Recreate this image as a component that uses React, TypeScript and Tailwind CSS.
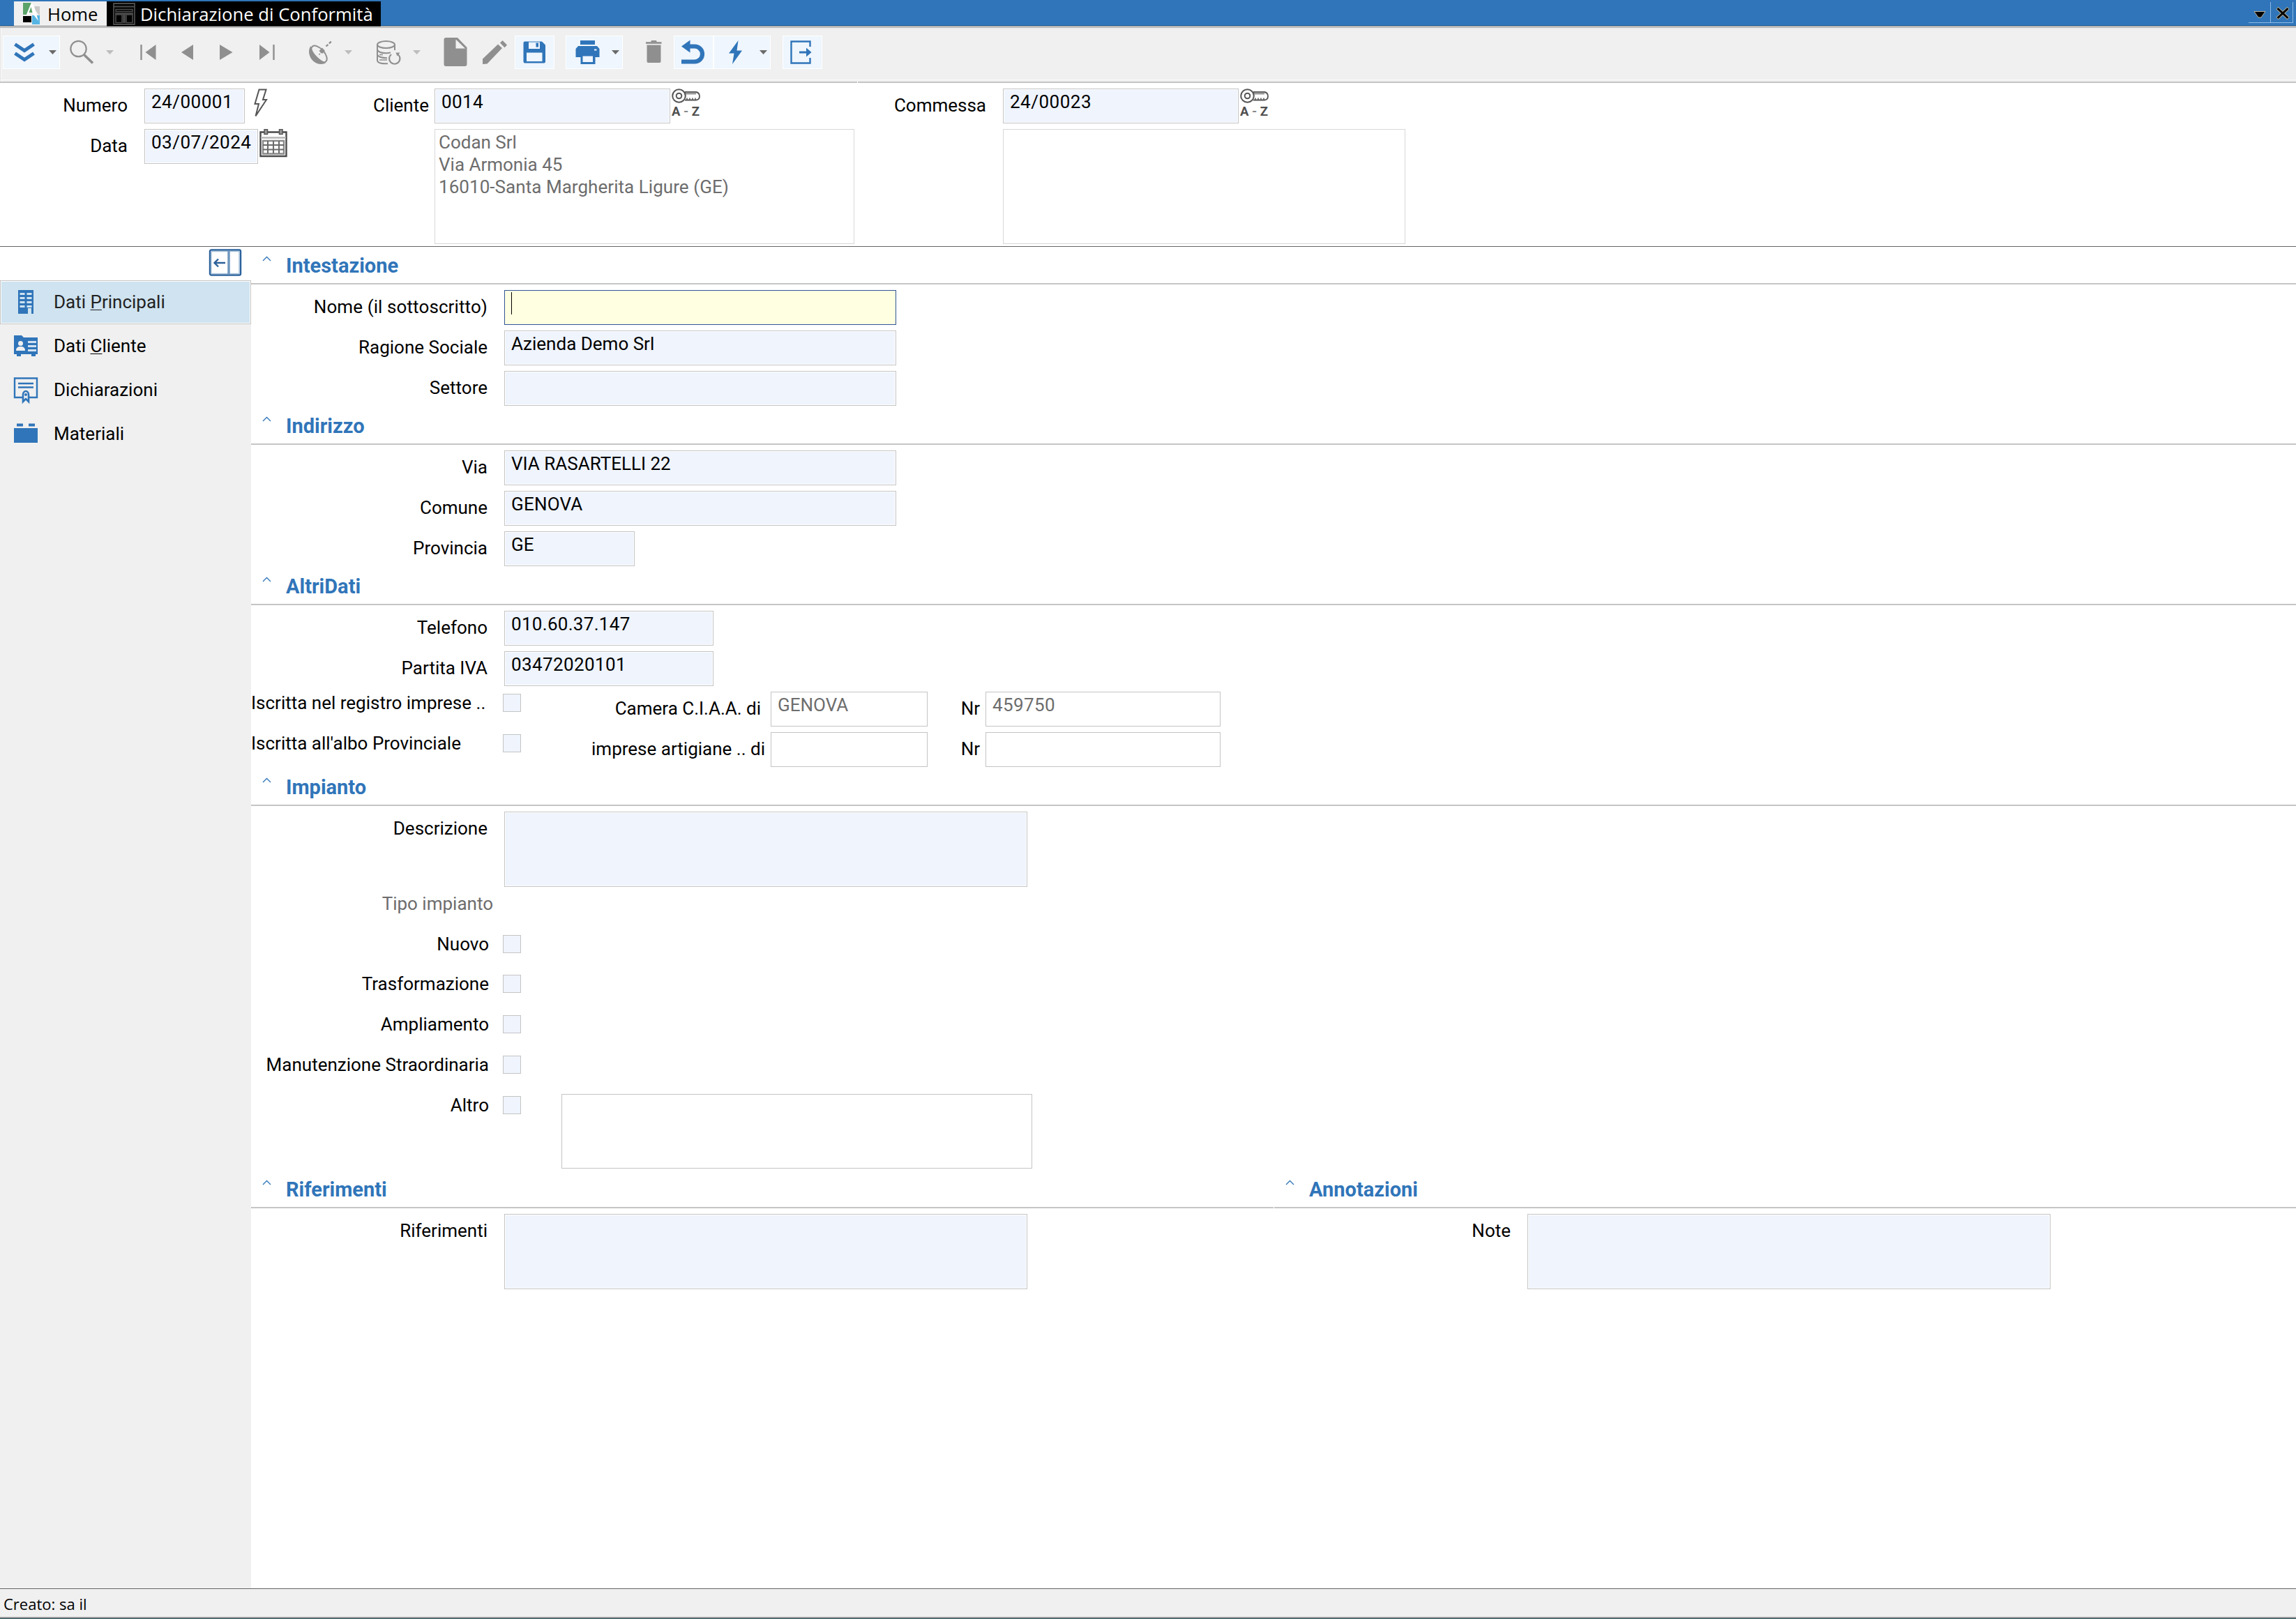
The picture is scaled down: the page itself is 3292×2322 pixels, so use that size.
import React from "react";
import type { ReactNode } from "react";

const BLUE = "#3075b9";
const GRAY = "#8f8f8f";

/* ---------- toolbar icons ---------- */

function Icon({ children, className = "" }: { children: ReactNode; className?: string }) {
  return (
    <svg width="34" height="34" viewBox="0 0 34 34" fill="none" className={`block shrink-0 overflow-visible ${className}`}>
      {children}
    </svg>
  );
}

const ChevronsDown = () => (
  <Icon>
    <path d="M3.5 5.5 17 14.5 30.5 5.5M3.5 18.5 17 27.5 30.5 18.5" stroke={BLUE} strokeWidth="5" />
  </Icon>
);
const Search = () => (
  <Icon>
    <circle cx="12.5" cy="12" r="11.2" stroke={GRAY} strokeWidth="2.2" />
    <path d="M20.5 20.5 33 32.5" stroke={GRAY} strokeWidth="3.6" />
  </Icon>
);
const First = () => (
  <Icon>
    <path d="M7.500 6v22" stroke={GRAY} strokeWidth="2.4" />
    <path d="M28.500 6v22L13.500 17z" fill={GRAY} />
  </Icon>
);
const Prev = () => (
  <Icon>
    <path d="M25 6v22L8 17z" fill={GRAY} />
  </Icon>
);
const Next = () => (
  <Icon>
    <path d="M6 6v22L24.500 17z" fill={GRAY} />
  </Icon>
);
const Last = () => (
  <Icon>
    <path d="M6 6v22L20.500 17z" fill={GRAY} />
    <path d="M26.500 6v22" stroke={GRAY} strokeWidth="2.4" />
  </Icon>
);
const Dish = () => (
  <Icon>
    <path d="M3.500 8C-1 14 1 24 7 29.500s14 5.500 18.500 2.500C17 29 6 19 3.500 8z" fill={GRAY} />
    <ellipse cx="15.500" cy="19.500" rx="14.500" ry="7.500" transform="rotate(48 15.5 19.500)" stroke={GRAY} strokeWidth="2" />
    <path d="M15.500 20.500 20 15" stroke={GRAY} strokeWidth="1.600" strokeDasharray="2 1.500" />
    <path d="M20 10.500 24 15 20 19 15.500 15z" fill={GRAY} />
    <path d="M25.500 8.500 34 .500" stroke={GRAY} strokeWidth="2.400" strokeDasharray="4 2" />
  </Icon>
);
const Database = () => (
  <Icon>
    <ellipse cx="13.500" cy="6" rx="12.500" ry="5" stroke={GRAY} strokeWidth="2" />
    <path d="M1 6v22.500c0 3 5 4.800 12 4.800h3M26 6v8" stroke={GRAY} strokeWidth="2" />
    <path d="M1 13.500c1.500 3.200 6 4.700 12.500 4.700 2.500 0 4.500-.2 6.500-.8M1 20.500c1.500 3.200 6 4.700 14 4.700" stroke={GRAY} strokeWidth="2" />
    <path d="M4 20.500h5M4 28h11" stroke={GRAY} strokeWidth="1.400" />
    <path d="M21 20a7.700 7.700 0 1 0 9.500 0" stroke={GRAY} strokeWidth="2.200" />
    <path d="M27.500 17.500h6l-4 5z" fill={GRAY} />
  </Icon>
);
const NewDoc = () => (
  <Icon>
    <path d="M3.500-4H21L34.500 10V34a3 3 0 0 1-3 3h-27a3 3 0 0 1-3-3V-1a3 3 0 0 1 3-3z" fill={GRAY} />
    <path d="M18.500-1.500V11.500h13.500z" fill="#f0f0f0" />
  </Icon>
);
const Pencil = () => (
  <Icon>
    <path d="M0 34V26.500L22 5.500l6 5.500L6.500 33.500z" fill={GRAY} />
    <path d="M25 3.500 28.500 0 35 6.500l-3.500 3.800z" fill={GRAY} />
  </Icon>
);
const Save = () => (
  <Icon>
    <path fillRule="evenodd" fill={BLUE} d="M1.500 3.500a2 2 0 0 1 2-2H28l5 5V30.500a2 2 0 0 1-2 2H3.500a2 2 0 0 1-2-2zM9 2v10h16V2zM6 17.500V30h22.500V17.500z" />
    <path d="M19.500 3.500h3.500v6h-3.500z" fill={BLUE} />
    <path d="M9 2.500h16" stroke="#9fc1e2" strokeWidth="1.500" />
  </Icon>
);
const Printer = () => (
  <Icon>
    <path d="M7 0h21v6H7z" fill={BLUE} />
    <path fillRule="evenodd" fill={BLUE} d="M4 8h27l3.500 4V24h-6v10h-21V24h-7V12zM10.500 22.500V31h14.500v-8.500z" />
    <path d="M27 13.500h3.500" stroke="#eff6fd" strokeWidth="2" />
  </Icon>
);
const Trash = () => (
  <Icon>
    <path d="M6 3.500h22.500" stroke={GRAY} strokeWidth="2.600" />
    <path d="M13 2.500 14 0h7l1 2.500" fill={GRAY} />
    <path d="M7.500 6.500h20V30a2 2 0 0 1-2 2h-16a2 2 0 0 1-2-2z" fill={GRAY} />
  </Icon>
);
const Undo = () => (
  <Icon>
    <path d="M0 30.500h19a11 11 0 0 0 0-22H11" stroke={BLUE} strokeWidth="6.200" />
    <path d="M0 8.500 12.500-.5v18z" fill={BLUE} />
  </Icon>
);
const Bolt = () => (
  <Icon>
    <path d="M21.500 0 8 18.500h7.500L13 34 27 14.500h-7.500z" fill={BLUE} />
  </Icon>
);
const Exit = () => (
  <Icon>
    <path d="M28.500 9V1.500H1.500v31h27V25" stroke={BLUE} strokeWidth="2.400" />
    <path d="M13 17h12" stroke={BLUE} strokeWidth="3" />
    <path d="M23 10.500 30.500 17 23 23.500z" fill={BLUE} />
  </Icon>
);

function Caret({ on }: { on?: boolean }) {
  return (
    <svg width="11" height="6" viewBox="0 0 11 6" className="mt-[14px] block shrink-0">
      <path d="M0 0h11L5.500 6z" fill={on ? "#6a6a6a" : "#bdbdbd"} />
    </svg>
  );
}

function Tool({ icon, on, menu, className = "" }: { icon: ReactNode; on?: boolean; menu?: boolean; className?: string }) {
  return (
    <div
      className={`flex h-[48px] shrink-0 border pt-[6px] ${menu ? "w-[82px] pl-[13px]" : "w-[57px] pl-[10px]"} ${
        on ? "border-white bg-[#eff6fd]" : "border-transparent"
      } ${className}`}
    >
      {icon}
      {menu && (
        <div className="ml-[18px]">
          <Caret on={on} />
        </div>
      )}
    </div>
  );
}

/* ---------- header icons ---------- */

const BoltOutline = () => (
  <svg width="22" height="42" viewBox="0 0 22 42" fill="none" className="block shrink-0">
    <path d="M8.500 1.500h10L14 16h5L3.500 39.500 8 22H2.500z" stroke="#555" strokeWidth="2" />
  </svg>
);
const Calendar = () => (
  <svg width="40" height="41" viewBox="0 0 40 41" fill="none" className="block shrink-0">
    <path d="M1.500 4.500h37V39h-37z" stroke="#4a4a4a" strokeWidth="2.400" />
    <path d="M2 12.500h36" stroke="#b5b5b5" strokeWidth="2.500" />
    <path d="M7 .5h4.500v7H7zM28.500.5H33v7h-4.500z" fill="#999" stroke="#555" strokeWidth="1.500" />
    <path d="M5 17h30v18.500H5z" fill="#fff" stroke="#8a8a8a" strokeWidth="2.400" />
    <path d="M12 17v18M20 17v18M28 17v18M5 23h30M5 29.500h30" stroke="#6a6a6a" strokeWidth="2" />
  </svg>
);
const KeyAZ = () => (
  <div className="w-[42px] shrink-0">
    <svg width="42" height="22" viewBox="0 0 42 22" fill="none" className="block">
      <path d="M19 5h16q5 1 5 6t-5 5.500H19" stroke="#555" strokeWidth="1.800" />
      <path d="M20 5.500h15v3H20z" fill="#999" />
      <path d="M22 16v-2.500M26 16v-2.500M30 16v-2.500M34 16v-2.500" stroke="#555" strokeWidth="1.500" />
      <circle cx="10.500" cy="10.500" r="9.300" fill="#fff" stroke="#555" strokeWidth="2" />
      <circle cx="10.500" cy="10.500" r="3.800" stroke="#555" strokeWidth="2" />
    </svg>
    <div className="flex justify-between pr-[2px] text-[18.5px] leading-[22px] font-bold text-[#4f4f4f]">
      <span>A</span>
      <span className="text-[#8a8a8a]">-</span>
      <span>Z</span>
    </div>
  </div>
);

/* ---------- sidebar icons ---------- */

const Building = () => (
  <svg width="36" height="36" viewBox="0 0 36 36" className="block shrink-0">
    <path d="M7 1h22v34h-3v-8h-5v8H7z" fill={BLUE} />
    <path d="M9.500 5h7v3H9.500zM19.500 5h7v3h-7zM9.500 11h7v3H9.500zM19.500 11h7v3h-7zM9.500 17h7v3H9.500zM19.500 17h7v3h-7zM9.500 23h7v3H9.500zM19.500 23h7v3h-7z" fill="#cfe3f0" />
  </svg>
);
const IdCard = () => (
  <svg width="36" height="36" viewBox="0 0 36 36" className="block shrink-0">
    <path d="M1 3h11l3 3h20v24h-3v3h-6v-3H11v3H5v-3H1z" fill={BLUE} />
    <circle cx="10.500" cy="14.500" r="3.500" fill="#f0f0f0" />
    <path d="M4 25c0-5 3-6 6.500-6s6.500 1 6.500 6z" fill="#f0f0f0" />
    <path d="M21 11h12v3H21zM21 17h12v3H21zM21 23h12v3H21z" fill="#d3e2f1" />
  </svg>
);
const Certificate = () => (
  <svg width="36" height="42" viewBox="0 0 36 42" fill="none" className="block shrink-0">
    <path d="M13 29H2V1.500h32V29H23" stroke={BLUE} strokeWidth="2.400" />
    <path d="M7 9h22M7 14.500h22" stroke={BLUE} strokeWidth="2.600" />
    <path d="M14 35V25a4 5 0 0 1 8 0v10l-4-4z" fill="#f0f0f0" stroke={BLUE} strokeWidth="2.600" />
    <circle cx="18" cy="25" r="2" fill={BLUE} />
  </svg>
);
const Brick = () => (
  <svg width="36" height="36" viewBox="0 0 36 36" className="block shrink-0">
    <path d="M5 3.500h9v4H5zM22 3.500h9v4h-9zM1 10h34v21H1z" fill={BLUE} />
  </svg>
);

/* ---------- form pieces ---------- */

const Box = ({ children, className = "" }: { children?: ReactNode; className?: string }) => (
  <div className={`shrink-0 border border-[#c4c4c4] pt-[2px] pl-[9px] leading-[32px] whitespace-pre ${className}`}>{children}</div>
);
const FILL = "bg-[#eff4fd] shadow-[inset_0_0_0_1px_#fff]";

const Label = ({ children, className = "" }: { children: ReactNode; className?: string }) => (
  <div className={`mt-[8px] shrink-0 text-right leading-[32px] whitespace-nowrap ${className}`}>{children}</div>
);

function Field({ label, value, width, tall }: { label: string; value?: ReactNode; width: string; tall?: boolean }) {
  return (
    <div className={`flex ${tall ? "h-[116px]" : "h-[58px]"}`}>
      <Label className="w-[339px]">{label}</Label>
      <Box className={`ml-[24px] ${tall ? "h-[108px]" : "h-[50px]"} ${FILL} ${width}`}>{value}</Box>
    </div>
  );
}

const Check = () => <div className="mt-[3px] ml-[20px] size-[26px] shrink-0 border border-[#c4c4c4] bg-[#eff4fd]" />;

function CheckRow({ label, children, className = "h-[58px]" }: { label: string; children?: ReactNode; className?: string }) {
  return (
    <div className={`flex ${className}`}>
      <div className="w-[341px] shrink-0 text-right leading-[32px] whitespace-nowrap">{label}</div>
      <Check />
      {children}
    </div>
  );
}

function RegisterRow({ label, caption, captionClass, place, number }: { label: string; caption: string; captionClass: string; place: string; number: string }) {
  return (
    <div className="flex h-[58px]">
      <div className="w-[341px] shrink-0 leading-[32px] whitespace-nowrap">{label}</div>
      <Check />
      <Label className={captionClass}>{caption}</Label>
      <Box className="h-[50px] w-[225px] text-[#6d6d6d]">{place}</Box>
      <Label className="w-[75px]">Nr</Label>
      <Box className="ml-[8px] h-[50px] w-[337px] tracking-[0.4px] text-[#6d6d6d]">{number}</Box>
    </div>
  );
}

function Section({ title, children, className }: { title: string; children: ReactNode; className: string }) {
  return (
    <section className={`flex shrink-0 flex-col ${className}`}>
      <div className="flex h-[54px] shrink-0 border-b-2 border-[#c5c5c5]">
        <svg width="13" height="8" viewBox="0 0 13 8" fill="none" className="mt-[13px] ml-[16px] block">
          <path d="M1 7 6.500 1.500 12 7" stroke={BLUE} strokeWidth="1.300" />
        </svg>
        <h2 className="mt-[11px] ml-[21px] text-[29px] leading-[32px] font-bold text-[#3075b9]">{title}</h2>
      </div>
      <div className="pt-[8px]">{children}</div>
    </section>
  );
}

function NavItem({ icon, children, active }: { icon: ReactNode; children: ReactNode; active?: boolean }) {
  return (
    <div
      className={`flex h-[63px] border pl-[18px] ${
        active ? "border-[#c4c4c4] bg-[#cfe3f0] text-[#222] shadow-[inset_0_0_0_1px_#fff]" : "border-transparent"
      }`}
    >
      <div className="mt-[12px]">{icon}</div>
      <div className="mt-[14px] ml-[22px] leading-[32px] whitespace-pre">{children}</div>
    </div>
  );
}

const Key = ({ children }: { children: ReactNode }) => (
  <span className="underline decoration-1 underline-offset-[2px] [text-decoration-skip-ink:none]">{children}</span>
);

/* ---------- page ---------- */

export default function App() {
  return (
    <div className="flex h-[2322px] w-[3292px] flex-col overflow-hidden bg-white font-['Roboto',sans-serif] text-[26px] text-black">
      {/* title bar */}
      <header className="flex h-[37px] shrink-0 bg-[#3075b9] pl-[20px] font-['Open_Sans',sans-serif] text-[25.67px] leading-[34px] whitespace-nowrap">
        <div className="mt-[2px] flex h-[35px] w-[133px] bg-[#f0f0f0]">
          <svg width="24" height="31" viewBox="0 0 24 31" className="mt-[2px] ml-[13px] block shrink-0">
            <path d="M0 0h12L5 17H0z" fill="#5aa469" />
            <path d="M13 5h11v14z" fill="#c9c9c9" />
            <path d="M0 19h12v9H0z" fill="#000" />
            <path d="M13 18h11v13H13z" fill="#57b4e3" />
            <path d="M5 17 12 0l4 5 6 21-7-9-3-5-3 5z" fill="#fff" />
            <path d="M8.500 14 11.500 6l2 8z" fill="#5aa469" />
          </svg>
          <div className="mt-[3px] ml-[11px] leading-[32px]">Home</div>
        </div>
        <div className="relative z-10 mt-[2px] flex h-[36px] w-[393px] bg-black text-white">
          <svg width="32" height="32" viewBox="0 0 32 32" fill="none" stroke="#4c4c4c" className="mt-[2px] ml-[9px] block shrink-0">
            <path d="M1 1h30v30H1z" strokeWidth="1.800" />
            <path d="M1 5.500h30" strokeWidth="2" />
            <path d="M4 9.500h24v3H4z" strokeWidth="1.500" />
            <path d="M3 15.500h26" strokeWidth="2.500" />
            <path d="M4 17h9v11.500H4zM19 17h9v11.500h-9z" strokeWidth="1.600" />
            <path d="M16 16v13" strokeWidth="3.500" />
          </svg>
          <div className="mt-[3px] ml-[7px] leading-[32px]">Dichiarazione di Conformità</div>
        </div>
        <div className="mt-[3px] ml-auto flex h-[30px] pr-[4px]">
          <div className="flex w-[32px] border-r border-b border-[#8db9e6]">
            <svg width="18" height="10" viewBox="0 0 18 10" className="mt-[13px] ml-[7px] block">
              <path d="M1 .5h16L11 9H7z" fill="#000" stroke="#b9b19a" strokeWidth="1" />
            </svg>
          </div>
          <div className="flex w-[32px] border-r border-b border-[#8db9e6]">
            <svg width="20" height="18" viewBox="0 0 20 18" className="mt-[7px] ml-[7px] block">
              <path d="M2 1.500 18 16.500M18 1.500 2 16.500" stroke="#b9b19a" strokeWidth="4.600" />
              <path d="M2.500 2 17.500 16M17.500 2 2.500 16" stroke="#000" strokeWidth="3" />
            </svg>
          </div>
        </div>
      </header>
      <div className="h-[3px] shrink-0 border-t border-b border-t-[#6c6c6c] border-b-[#a0a0a0] bg-white" />

      {/* toolbar */}
      <div className="flex h-[77px] shrink-0 bg-[#f0f0f0] pt-[11px] pl-[4px] shadow-[inset_1px_0_0_#e4e4e4,inset_2px_0_0_#fafafa,inset_0_-2px_0_#f0f0f0,inset_0_-3px_0_#fafafa]">
        <Tool icon={<ChevronsDown />} on menu />
        <Tool icon={<Search />} menu />
        <Tool icon={<First />} className="ml-[16px]" />
        <Tool icon={<Prev />} />
        <Tool icon={<Next />} />
        <Tool icon={<Last />} />
        <Tool icon={<Dish />} menu className="ml-[16px]" />
        <Tool icon={<Database />} menu className="ml-[16px]" />
        <Tool icon={<NewDoc />} className="ml-[16px]" />
        <Tool icon={<Pencil />} />
        <Tool icon={<Save />} on />
        <Tool icon={<Printer />} on menu className="ml-[16px]" />
        <Tool icon={<Trash />} className="ml-[16px]" />
        <Tool icon={<Undo />} on />
        <Tool icon={<Bolt />} on menu />
        <Tool icon={<Exit />} on className="ml-[17px]" />
      </div>
      <div className="flex h-[2px] shrink-0 gap-px">
        <div className="w-[1229px] bg-[#c5c5c5]" />
        <div className="flex-1 bg-[#c5c5c5]" />
      </div>

      {/* document header */}
      <div className="flex h-[235px] shrink-0 border-b border-[#646464] pt-[8px]">
        <div className="w-[430px] shrink-0">
          <div className="flex h-[58px]">
            <Label className="w-[183px]">Numero</Label>
            <Box className={`ml-[24px] h-[50px] w-[144px] tracking-[0.5px] ${FILL}`}>24/00001</Box>
            <div className="ml-[12px]">
              <BoltOutline />
            </div>
          </div>
          <div className="flex h-[58px]">
            <Label className="w-[183px]">Data</Label>
            <Box className={`ml-[24px] h-[50px] w-[163px] tracking-[0.5px] ${FILL}`}>03/07/2024</Box>
            <div className="ml-[2px]">
              <Calendar />
            </div>
          </div>
        </div>
        <div className="w-[800px] shrink-0">
          <div className="flex h-[58px]">
            <Label className="w-[185px]">Cliente</Label>
            <Box className={`ml-[8px] h-[50px] w-[338px] tracking-[0.4px] ${FILL}`}>0014</Box>
            <div className="ml-[2px]">
              <KeyAZ />
            </div>
          </div>
          <div className="ml-[193px] h-[165px] w-[602px] border border-[#d8d8d8] pt-[2px] pl-[5px] leading-[32px] text-[#6d6d6d]">
            Codan Srl
            <br />
            Via Armonia 45
            <br />
            <span className="tracking-[0.05px]">16010-Santa Margherita Ligure (GE)</span>
          </div>
        </div>
        <div>
          <div className="flex h-[58px]">
            <Label className="w-[184px]">Commessa</Label>
            <Box className={`ml-[24px] h-[50px] w-[338px] tracking-[0.5px] ${FILL}`}>24/00023</Box>
            <div className="ml-[2px]">
              <KeyAZ />
            </div>
          </div>
          <div className="ml-[208px] h-[165px] w-[577px] border border-[#d8d8d8]" />
        </div>
      </div>

      {/* body */}
      <div className="flex min-h-0 flex-1">
        <aside className="flex w-[360px] shrink-0 flex-col bg-[#f0f0f0]">
          <div className="flex h-[48px] shrink-0 justify-end bg-white pt-[3px] pr-[13px]">
            <svg width="48" height="40" viewBox="0 0 48 40" fill="none" className="block">
              <path d="M2 3.500a2 2 0 0 1 2-2h40a2 2 0 0 1 2 2v32a2 2 0 0 1-2 2H4a2 2 0 0 1-2-2z" stroke="#2b619b" strokeWidth="2.400" />
              <path d="M4 3.500h40v32H4z" stroke="#a9c4dc" strokeWidth="1.500" />
              <path d="M29 2v35" stroke="#7098bf" strokeWidth="3.500" />
              <path d="M24 20H9M14 14.500 8.500 20l5.500 5.500" stroke="#2b619b" strokeWidth="2.400" />
            </svg>
          </div>
          <NavItem icon={<Building />} active>
            Dati <Key>P</Key>rincipali
          </NavItem>
          <NavItem icon={<IdCard />}>
            Dati <Key>C</Key>liente
          </NavItem>
          <NavItem icon={<Certificate />}>Dichiarazioni</NavItem>
          <NavItem icon={<Brick />}>Materiali</NavItem>
        </aside>

        <main className="flex min-w-0 flex-1 flex-col">
          <Section title="Intestazione" className="h-[230px]">
            <div className="flex h-[58px]">
              <Label className="w-[339px] tracking-[0.1px]">Nome (il sottoscritto)</Label>
              <div className="ml-[24px] h-[50px] w-[562px] border border-[#2f5597] bg-[#ffffe1] pt-[2px] pl-[9px]">
                <div className="h-[32px] w-px bg-black" />
              </div>
            </div>
            <Field label="Ragione Sociale" value="Azienda Demo Srl" width="w-[562px]" />
            <Field label="Settore" width="w-[562px]" />
          </Section>
          <Section title="Indirizzo" className="h-[230px]">
            <Field label="Via" value="VIA RASARTELLI 22" width="w-[562px]" />
            <Field label="Comune" value={<span className="tracking-[0.2px]">GENOVA</span>} width="w-[562px]" />
            <Field label="Provincia" value="GE" width="w-[187px]" />
          </Section>
          <Section title="AltriDati" className="h-[288px]">
            <Field label="Telefono" value={<span className="tracking-[0.3px]">010.60.37.147</span>} width="w-[300px]" />
            <Field label="Partita IVA" value={<span className="tracking-[0.4px]">03472020101</span>} width="w-[300px]" />
            <RegisterRow
              label="Iscritta nel registro imprese .."
              caption="Camera C.I.A.A. di"
              captionClass="w-[344px] mr-[14px]"
              place="GENOVA"
              number="459750"
            />
            <RegisterRow
              label="Iscritta all'albo Provinciale"
              caption="imprese artigiane .. di"
              captionClass="w-[350px] mr-[8px]"
              place=""
              number=""
            />
          </Section>
          <Section title="Impianto" className="h-[577px]">
            <Field label="Descrizione" width="w-[750px]" tall />
            <div className="h-[58px] w-[347px] text-right leading-[32px] text-[#6d6d6d]">Tipo impianto</div>
            <CheckRow label="Nuovo" className="h-[57px]" />
            <CheckRow label="Trasformazione" />
            <CheckRow label="Ampliamento" />
            <CheckRow label="Manutenzione Straordinaria" />
            <CheckRow label="Altro">
              <div className="ml-[58px] h-[107px] w-[675px] shrink-0 border border-[#c4c4c4]" />
            </CheckRow>
          </Section>
          <div className="flex gap-px">
            <Section title="Riferimenti" className="w-[1466px]">
              <Field label="Riferimenti" width="w-[750px]" tall />
            </Section>
            <Section title="Annotazioni" className="flex-1">
              <Field label="Note" width="w-[750px]" tall />
            </Section>
          </div>
        </main>
      </div>

      {/* status bar */}
      <footer className="flex h-[44px] shrink-0 flex-col border-t border-[#646464] bg-[#f0f0f0] font-['Open_Sans',sans-serif] text-[22px]">
        <div className="h-[40px] pt-[5px] pl-[5px] leading-[32px]">Creato: sa il</div>
        <div className="h-[2px] bg-[#969696]" />
        <div className="h-px bg-[#2f5560]" />
      </footer>
    </div>
  );
}
